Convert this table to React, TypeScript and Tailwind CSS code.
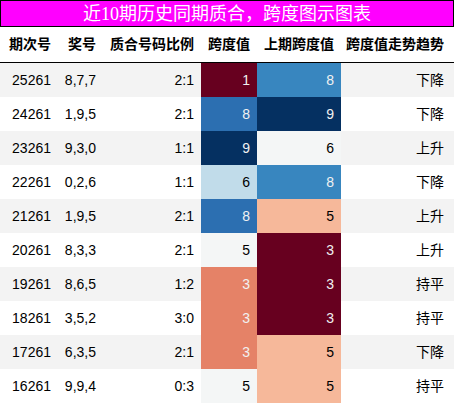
import React from "react";

type Row = {
  issue: string;
  nums: string;
  ratio: string;
  span: number;
  prev: number;
  trend: string;
};

const rows: Row[] = [
  { issue: "25261", nums: "8,7,7", ratio: "2:1", span: 1, prev: 8, trend: "下降" },
  { issue: "24261", nums: "1,9,5", ratio: "2:1", span: 8, prev: 9, trend: "下降" },
  { issue: "23261", nums: "9,3,0", ratio: "1:1", span: 9, prev: 6, trend: "上升" },
  { issue: "22261", nums: "0,2,6", ratio: "1:1", span: 6, prev: 8, trend: "下降" },
  { issue: "21261", nums: "1,9,5", ratio: "2:1", span: 8, prev: 5, trend: "上升" },
  { issue: "20261", nums: "8,3,3", ratio: "2:1", span: 5, prev: 3, trend: "上升" },
  { issue: "19261", nums: "8,6,5", ratio: "1:2", span: 3, prev: 3, trend: "持平" },
  { issue: "18261", nums: "3,5,2", ratio: "3:0", span: 3, prev: 3, trend: "持平" },
  { issue: "17261", nums: "6,3,5", ratio: "2:1", span: 3, prev: 5, trend: "下降" },
  { issue: "16261", nums: "9,9,4", ratio: "0:3", span: 5, prev: 5, trend: "持平" },
];

// gradient colours per column (min..max scaled separately)
const spanColor: Record<number, string> = {
  1: "bg-[#67001f] text-[#f1f1f1]",
  3: "bg-[#e58267] text-[#f1f1f1]",
  5: "bg-[#f4f6f6] text-black",
  6: "bg-[#c1dcea] text-black",
  8: "bg-[#2c6fb1] text-[#f1f1f1]",
  9: "bg-[#053061] text-[#f1f1f1]",
};

const prevColor: Record<number, string> = {
  3: "bg-[#67001f] text-[#f1f1f1]",
  5: "bg-[#f6b89a] text-black",
  6: "bg-[#f4f6f6] text-black",
  8: "bg-[#3886bf] text-[#f1f1f1]",
  9: "bg-[#053061] text-[#f1f1f1]",
};

const headers = ["期次号", "奖号", "质合号码比例", "跨度值", "上期跨度值", "跨度值走势趋势"];

const grid = "grid grid-cols-[58px_45px_98px_56px_84px_110px]";
const cell = "flex items-center justify-end pr-[7px]";

export default function App() {
  return (
    <div className="w-[454px] h-[405px] bg-white font-['Liberation_Sans','Noto_Sans_CJK_SC',sans-serif] text-[14px] text-black">
      {/* Title bar */}
      <div className="h-[27px] border border-black bg-[#ff00ff] flex items-center justify-center">
        <span className="text-white text-[18px] leading-none font-['Liberation_Serif','Noto_Sans_CJK_SC',serif]">
          近10期历史同期质合，跨度图示图表
        </span>
      </div>

      {/* Header */}
      <div className={`${grid} h-[36px] border-b border-black font-bold`}>
        {headers.map((h) => (
          <div key={h} className={cell}>
            {h}
          </div>
        ))}
      </div>

      {/* Body */}
      {rows.map((r, i) => (
        <div key={r.issue} className={`${grid} h-[34px] ${i % 2 === 0 ? "bg-[#f3f3f3]" : "bg-white"}`}>
          <div className={cell}>{r.issue}</div>
          <div className={cell}>{r.nums}</div>
          <div className={cell}>{r.ratio}</div>
          <div className={`${cell} ${spanColor[r.span]}`}>{r.span}</div>
          <div className={`${cell} ${prevColor[r.prev]}`}>{r.prev}</div>
          <div className={cell}>{r.trend}</div>
        </div>
      ))}
    </div>
  );
}
